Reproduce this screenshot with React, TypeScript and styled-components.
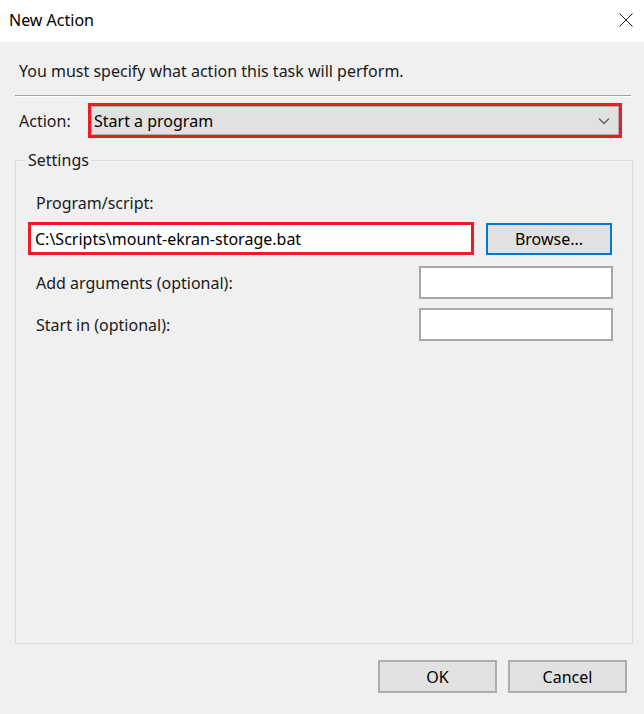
import React from "react";
import styled, { createGlobalStyle } from "styled-components";

const GlobalStyle = createGlobalStyle`
  html, body {
    margin: 0;
    padding: 0;
    background: #f0f0f0;
  }
  body {
    font-family: "Noto Sans", "Liberation Sans", Arial, sans-serif;
    color: #000;
  }
`;

const Window = styled.div`
  display: flex;
  flex-direction: column;
  width: 644px;
  height: 714px;
  overflow: hidden;
`;

const TitleBar = styled.div`
  display: flex;
  align-items: center;
  justify-content: space-between;
  height: 42px;
  padding: 0 11px 2px 9px;
  box-sizing: border-box;
  background: #fff;
  font-size: 16px;
`;

const CloseButton = styled.div`
  display: flex;
  width: 14px;
  height: 14px;
`;

const Body = styled.div`
  display: flex;
  flex-direction: column;
  flex: 1;
  padding: 0 12px 0 15px;
  background: #f0f0f0;
`;

const Intro = styled.div`
  margin-top: 19px;
  padding-left: 4px;
  font-size: 16px;
  line-height: 20px;
  color: #1a1a1a;
`;

const Separator = styled.div`
  margin: 14px 1px 0 0;
  border-top: 1px solid #a0a0a0;
  border-bottom: 1px solid #fff;
`;

const ActionRow = styled.div`
  display: flex;
  align-items: center;
  margin-top: 6px;
  padding-left: 4px;
`;

const Label = styled.span<{ $indent?: number }>`
  font-size: 16px;
  line-height: 20px;
  padding-left: ${(p) => p.$indent ?? 0}px;
  color: #1a1a1a;
`;

const ActionLabel = styled(Label)`
  width: 69px;
`;

const Highlight = styled.div<{ $width: number; $height: number }>`
  display: flex;
  width: ${(p) => p.$width}px;
  height: ${(p) => p.$height}px;
  box-sizing: border-box;
  border: 3px solid #ec1c24;
`;

const Combo = styled.div`
  display: flex;
  flex: 1;
  align-items: center;
  justify-content: space-between;
  padding: 0 8px 0 2px;
  background: #e1e1e1;
  border: 1px solid #adadad;
  font-size: 16px;
`;

const HighlightedInput = styled.div`
  display: flex;
  flex: 1;
  align-items: center;
  padding-left: 4px;
  background: #fff;
  font-size: 16px;
`;

const TextBox = styled.div<{ $width: number }>`
  box-sizing: border-box;
  width: ${(p) => p.$width}px;
  height: 33px;
  background: #fff;
  border: 2px solid #a8a8a8;
`;

const Group = styled.fieldset`
  display: flex;
  flex-direction: column;
  flex: 1;
  min-width: 0;
  margin: 12px -1px 0 0;
  padding: 0 19px 0 12px;
  border: 1px solid #dcdcdc;
`;

const Legend = styled.legend`
  margin-left: -3px;
  padding: 0 3px;
  font-size: 16px;
  line-height: 20px;
  color: #1a1a1a;
`;

const ProgramLabel = styled(Label)`
  margin-top: 23px;
`;

const ProgramRow = styled.div`
  display: flex;
  align-items: flex-start;
  gap: 12px;
  margin-top: 9px;
`;

const Button = styled.button<{ $focused?: boolean }>`
  width: ${(p) => (p.$focused ? 126 : 119)}px;
  height: ${(p) => (p.$focused ? 32 : 33)}px;
  margin-top: ${(p) => (p.$focused ? 1 : 0)}px;
  padding: 0;
  background: #e1e1e1;
  border: 2px solid ${(p) => (p.$focused ? "#0078d7" : "#adadad")};
  font-family: inherit;
  font-size: 16px;
  color: #000;
`;

const FieldRow = styled.div<{ $gap: number }>`
  display: flex;
  align-items: center;
  justify-content: space-between;
  margin-top: ${(p) => p.$gap}px;
`;

const Footer = styled.div`
  display: flex;
  justify-content: flex-end;
  gap: 11px;
  height: 70px;
  padding: 16px 5px 0 0;
  box-sizing: border-box;
`;

const Chevron = () => (
  <svg width="12" height="8" viewBox="0 0 12 8">
    <path d="M1 1.5 L6 6.5 L11 1.5" fill="none" stroke="#606060" strokeWidth="1.4" />
  </svg>
);

const CloseIcon = () => (
  <svg width="14" height="14" viewBox="0 0 14 14">
    <path d="M0.5 0.5 L13.5 13.5 M13.5 0.5 L0.5 13.5" stroke="#202020" strokeWidth="1" />
  </svg>
);

const App = () => {
  return (
    <Window>
      <GlobalStyle />
      <TitleBar>
        <span>New Action</span>
        <CloseButton>
          <CloseIcon />
        </CloseButton>
      </TitleBar>
      <Body>
        <Intro>You must specify what action this task will perform.</Intro>
        <Separator />
        <ActionRow>
          <ActionLabel>Action:</ActionLabel>
          <Highlight $width={534} $height={35}>
            <Combo>
              <span>Start a program</span>
              <Chevron />
            </Combo>
          </Highlight>
        </ActionRow>
        <Group>
          <Legend>Settings</Legend>
          <ProgramLabel $indent={8}>Program/script:</ProgramLabel>
          <ProgramRow>
            <Highlight $width={446} $height={33}>
              <HighlightedInput>C:\Scripts\mount-ekran-storage.bat</HighlightedInput>
            </Highlight>
            <Button $focused>Browse...</Button>
          </ProgramRow>
          <FieldRow $gap={11}>
            <Label $indent={8}>Add arguments (optional):</Label>
            <TextBox $width={194} />
          </FieldRow>
          <FieldRow $gap={9}>
            <Label $indent={8}>Start in (optional):</Label>
            <TextBox $width={194} />
          </FieldRow>
        </Group>
        <Footer>
          <Button>OK</Button>
          <Button>Cancel</Button>
        </Footer>
      </Body>
    </Window>
  );
};

export default App;
